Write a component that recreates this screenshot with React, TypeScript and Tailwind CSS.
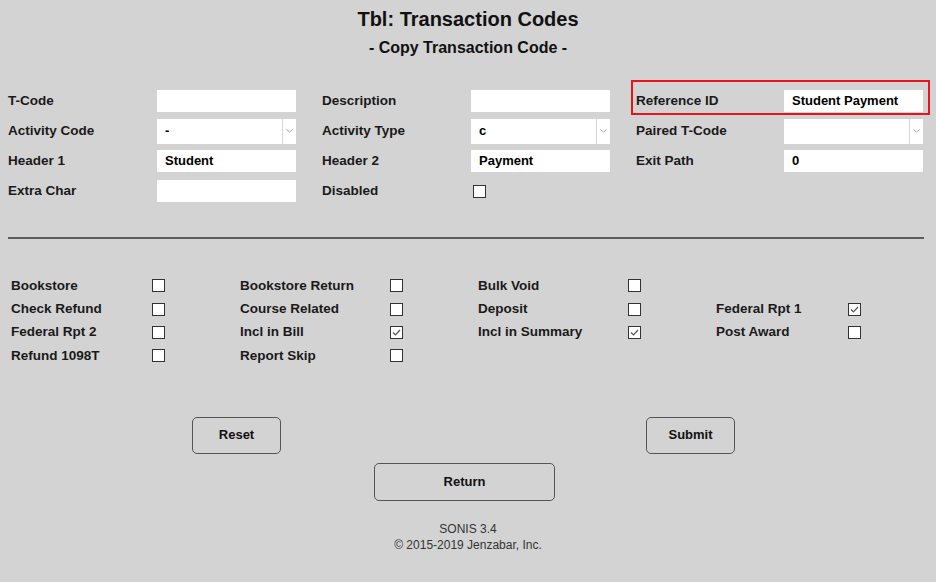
import React from "react";

const font = { fontFamily: '"Liberation Sans", Arial, sans-serif' };

function TextBox({ value }: { value?: string }) {
  return (
    <div className="w-[139px] h-[22px] bg-white flex items-center pl-[8px] text-[13px] font-bold text-black">
      {value}
    </div>
  );
}

function SelectBox({ value }: { value?: string }) {
  return (
    <div className="w-[139px] h-[25px] bg-white flex items-center text-[13px] font-bold text-black">
      <div className="flex-1 pl-[8px]">{value}</div>
      <div className="w-[14px] h-full border-l border-[#d6d6d6] flex items-center justify-center">
        <svg width="7" height="4" viewBox="0 0 7 4">
          <path d="M0.5 0.5 L3.5 3 L6.5 0.5" stroke="#a0a0a0" strokeWidth="1" fill="none" />
        </svg>
      </div>
    </div>
  );
}

function Check({ checked }: { checked?: boolean }) {
  return (
    <div className="w-[13px] h-[13px] bg-white border border-[#333] flex items-center justify-center">
      {checked && (
        <svg width="11" height="11" viewBox="0 0 11 11">
          <path d="M2 5.5 L4.5 8 L9 3" stroke="#555" strokeWidth="1.2" fill="none" />
        </svg>
      )}
    </div>
  );
}

const Label = ({ children }: { children: React.ReactNode }) => (
  <div className="text-[13.5px] font-bold text-[#1a1a1a] whitespace-nowrap">{children}</div>
);

export default function App() {
  const cbRows: ([string, boolean] | null)[][] = [
    [["Bookstore", false], ["Bookstore Return", false], ["Bulk Void", false], null],
    [["Check Refund", false], ["Course Related", false], ["Deposit", false], ["Federal Rpt 1", true]],
    [["Federal Rpt 2", false], ["Incl in Bill", true], ["Incl in Summary", true], ["Post Award", false]],
    [["Refund 1098T", false], ["Report Skip", false], null, null],
  ];
  return (
    <div className="w-full h-[582px] bg-[#d3d3d3] text-black overflow-hidden" style={font}>
      <div className="pt-[6px] text-center text-[20px] font-bold leading-[26px] text-[#111]">Tbl: Transaction Codes</div>
      <div className="mt-[6px] text-center text-[16px] font-bold leading-[20px] text-[#111]">- Copy Transaction Code -</div>

      <div className="mt-[28px] ml-[8px] grid grid-cols-[149px_165px_149px_165px_148px_139px] auto-rows-[30px] items-center">
        <Label>T-Code</Label>
        <TextBox />
        <Label>Description</Label>
        <TextBox />
        <div className="relative h-full flex items-center">
          <div className="absolute left-[-5px] top-[-6px] w-[299px] h-[35px] border-2 border-[#e8141b] pointer-events-none" />
          <Label>Reference ID</Label>
        </div>
        <div className="relative">
          <TextBox value="Student Payment" />
        </div>

        <Label>Activity Code</Label>
        <SelectBox value="-" />
        <Label>Activity Type</Label>
        <SelectBox value="c" />
        <Label>Paired T-Code</Label>
        <SelectBox />

        <Label>Header 1</Label>
        <TextBox value="Student" />
        <Label>Header 2</Label>
        <TextBox value="Payment" />
        <Label>Exit Path</Label>
        <TextBox value="0" />

        <Label>Extra Char</Label>
        <TextBox />
        <Label>Disabled</Label>
        <div className="pl-[2px]">
          <Check />
        </div>
        <div />
        <div />
      </div>

      <div className="mt-[31px] mx-[8px] w-[916px] border-t-2 border-[#5c5c5c]" />

      <div className="mt-[35px] ml-[11px] grid grid-cols-[141px_88px_150px_88px_150px_88px_132px_40px] auto-rows-[23.4px] items-center">
        {cbRows.map((row, ri) =>
          row.map((cell, ci) =>
            cell ? (
              <React.Fragment key={`${ri}-${ci}`}>
                <Label>{cell[0]}</Label>
                <Check checked={cell[1]} />
              </React.Fragment>
            ) : (
              <React.Fragment key={`${ri}-${ci}`}>
                <div />
                <div />
              </React.Fragment>
            )
          )
        )}
      </div>

      <div className="mt-[49px] ml-[192px] flex gap-[365px]">
        <button className="w-[89px] h-[37px] rounded-[5px] border border-[#555] text-[13px] font-bold text-[#111]">Reset</button>
        <button className="w-[89px] h-[37px] rounded-[5px] border border-[#555] text-[13px] font-bold text-[#111]">Submit</button>
      </div>
      <div className="mt-[9px] ml-[374px]">
        <button className="w-[181px] h-[38px] rounded-[5px] border border-[#555] text-[13px] font-bold text-[#111]">Return</button>
      </div>

      <div className="mt-[20px] text-center text-[12px] leading-[16px] text-[#333]">
        <div>SONIS 3.4</div>
        <div>© 2015-2019 Jenzabar, Inc.</div>
      </div>
    </div>
  );
}
